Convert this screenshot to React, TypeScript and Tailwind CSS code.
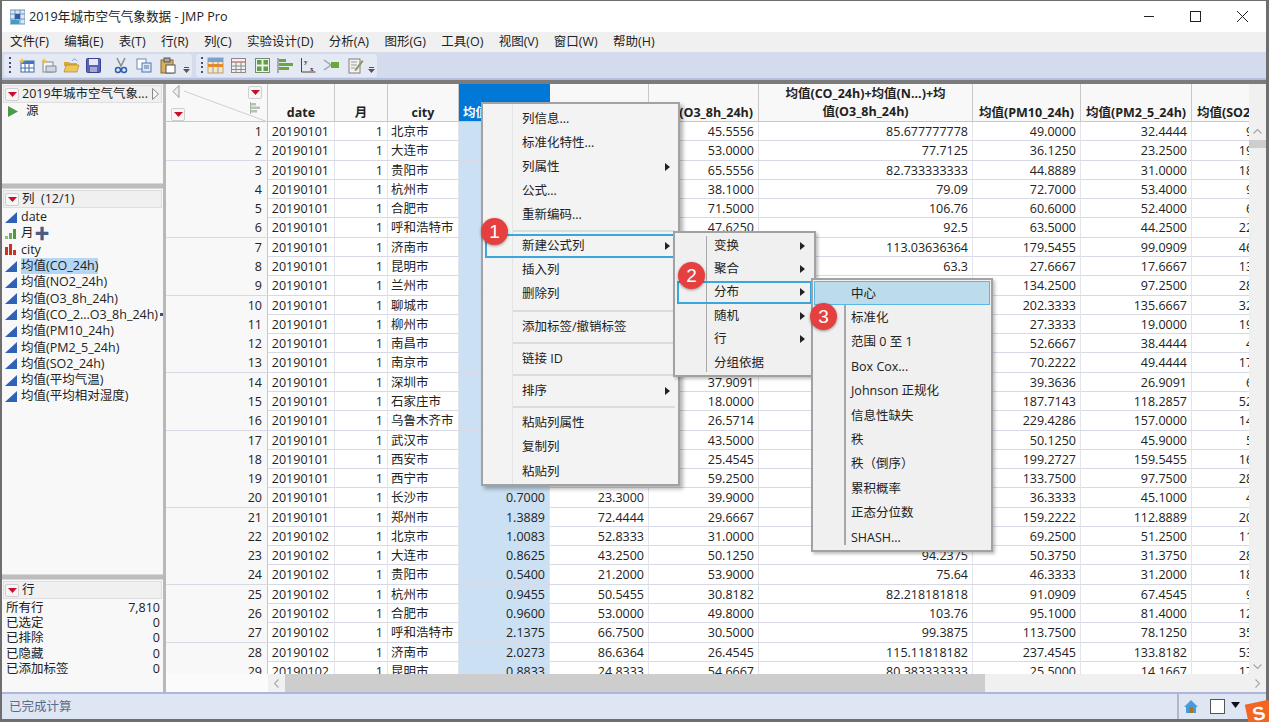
import React from "react";

const cities = ["北京市","大连市","贵阳市","杭州市","合肥市","呼和浩特市","济南市","昆明市","兰州市","聊城市","柳州市","南昌市","南京市","深圳市","石家庄市","乌鲁木齐市","武汉市","西安市","西宁市","长沙市","郑州市","北京市","大连市","贵阳市","杭州市","合肥市","呼和浩特市","济南市","昆明市"];
const co = ["","","","","","","","","","","","","","","","","","","","0.7000","1.3889","1.0083","0.8625","0.5400","0.9455","0.9600","2.1375","2.0273","0.8833"];
const no2 = ["","","","","","","","","","","","","","","","","","","","23.3000","72.4444","52.8333","43.2500","21.2000","50.5455","53.0000","66.7500","86.6364","24.8333"];
const o3 = ["45.5556","53.0000","65.5556","38.1000","71.5000","47.6250","","","","","","","","37.9091","18.0000","26.5714","43.5000","25.4545","59.2500","39.9000","29.6667","31.0000","50.1250","53.9000","30.8182","49.8000","30.5000","26.4545","54.6667"];
const combo = ["85.677777778","77.7125","82.733333333","79.09","106.76","92.5","113.03636364","63.3","","","","","","","","","","","","","","","94.2375","75.64","82.218181818","103.76","99.3875","115.11818182","80.383333333"];
const pm10 = ["49.0000","36.1250","44.8889","72.7000","60.6000","63.5000","179.5455","27.6667","134.2500","202.3333","27.3333","52.6667","70.2222","39.3636","187.7143","229.4286","50.1250","199.2727","133.7500","36.3333","159.2222","69.2500","50.3750","46.3333","91.0909","95.1000","113.7500","237.4545","25.5000"];
const pm25 = ["32.4444","23.2500","31.0000","53.4000","52.4000","44.2500","99.0909","17.6667","97.2500","135.6667","19.0000","38.4444","49.4444","26.9091","118.2857","157.0000","45.9000","159.5455","97.7500","45.1000","112.8889","51.2500","31.3750","31.2000","67.4545","81.4000","78.1250","133.8182","14.1667"];
const so2 = ["9.0000","19.0000","18.0000","9.0000","6.0000","22.0000","46.0000","13.0000","28.0000","32.0000","19.0000","4.0000","17.0000","6.0000","52.0000","14.0000","5.0000","16.0000","28.0000","4.0000","20.0000","11.0000","28.0000","18.0000","9.0000","12.0000","35.0000","53.0000","17.0000"];

const gridCols = "grid grid-cols-[102px_67px_53px_71px_91px_99px_110px_214px_108px_111px_98px]";

function RedBtn() {
  return (
    <span className="flex h-[13px] w-[14px] items-center justify-center rounded-[2px] border border-[#cfcfcf] bg-[#f6f6f6]">
      <svg width="9" height="5" viewBox="0 0 9 5"><path d="M0 0h9L4.5 5z" fill="#c8102e" /></svg>
    </span>
  );
}

function ColIcon({ kind = "c" }: { kind?: "c" | "o" | "n" }) {
  if (kind === "o")
    return (
      <svg width="12" height="11" viewBox="0 0 12 11" className="shrink-0">
        <rect x="0" y="8" width="3" height="3" fill="#8fbf80" />
        <rect x="4" y="5" width="3" height="6" fill="#6aa85c" />
        <rect x="8" y="1" width="3" height="10" fill="#4c9a44" />
      </svg>
    );
  if (kind === "n")
    return (
      <svg width="12" height="11" viewBox="0 0 12 11" className="shrink-0">
        <rect x="0" y="3" width="3" height="8" fill="#c8321e" />
        <rect x="4" y="0" width="3" height="11" fill="#c8321e" />
        <rect x="8" y="6" width="3" height="5" fill="#c8321e" />
      </svg>
    );
  return (
    <svg width="12" height="11" viewBox="0 0 12 11" className="shrink-0">
      <path d="M0 11L12 0v11z" fill="#2f62b5" />
    </svg>
  );
}

function Grip() {
  return (
    <span className="mx-[1px] flex h-[16px] w-[2px] flex-col justify-between">
      {[0, 1, 2, 3].map((i) => <span key={i} className="h-[2px] w-[2px] bg-[#44507a]" />)}
    </span>
  );
}

function Overflow() {
  return (
    <span className="mt-[10px] flex w-[7px] flex-col items-center gap-[1px]">
      <span className="h-[1px] w-[5px] bg-[#555]" />
      <svg width="7" height="4" viewBox="0 0 7 4"><path d="M0 0h7L3.5 4z" fill="#555" /></svg>
    </span>
  );
}

function Ic({ children }: { children: React.ReactNode }) {
  return <svg width="17" height="17" viewBox="0 0 17 17" className="shrink-0">{children}</svg>;
}

const toolA = [
  <Ic key="a"><rect x="2" y="4" width="13" height="11" fill="#fff" stroke="#3f6aa8" /><path d="M2 4h13v3H2z" fill="#3f78c0" /><path d="M6 7v8M10 7v8M2 11h13" stroke="#3f6aa8" /><path d="M3 1l1 2 2 1-2 1-1 2-1-2-2-1 2-1z" fill="#f2c230" /></Ic>,
  <Ic key="b"><rect x="2" y="5" width="10" height="10" fill="#f3f3f3" stroke="#8a8a8a" /><path d="M5 9h10v6H5z" fill="#cfd6dd" stroke="#7a8a9a" /><path d="M3 1l1 2 2 1-2 1-1 2-1-2-2-1 2-1z" fill="#f2c230" /></Ic>,
  <Ic key="c"><path d="M1 5h5l1 1h7v3H1z" fill="#d9a93a" /><path d="M1 15l2-7h13l-2 7z" fill="#efc65a" stroke="#a97c20" strokeWidth=".6" /><path d="M9 4c2-3 4-2 5 0" stroke="#6aa0d0" fill="none" /></Ic>,
  <Ic key="d"><rect x="1.500" y="1.500" width="14" height="14" rx="1" fill="#5a62b8" stroke="#3a4490" /><rect x="4" y="2" width="9" height="6" fill="#e8e8f4" /><rect x="5" y="10" width="7" height="5" fill="#a4a9cf" /></Ic>,
];
const toolB = [
  <Ic key="e"><path d="M4 1l4 8 4-8" fill="none" stroke="#8a8a8a" strokeWidth="1.500" /><circle cx="5" cy="13" r="2.500" fill="none" stroke="#2f5fa8" strokeWidth="1.500" /><circle cx="11" cy="13" r="2.500" fill="none" stroke="#2f5fa8" strokeWidth="1.500" /></Ic>,
  <Ic key="f"><rect x="1" y="2" width="9" height="10" fill="#fff" stroke="#6a8ab8" /><rect x="6" y="6" width="9" height="9" fill="#dce8f6" stroke="#4a78b0" /><path d="M8 9h5M8 11h5" stroke="#4a78b0" /></Ic>,
  <Ic key="g"><rect x="2" y="3" width="12" height="13" fill="#d8b060" stroke="#8a6a28" /><rect x="5" y="1" width="6" height="4" fill="#a8a8a8" stroke="#555" /><rect x="7" y="8" width="9" height="8" fill="#fff" stroke="#555" /></Ic>,
];
const toolC = [
  <Ic key="h"><rect x="1" y="1" width="15" height="15" fill="#f5e8c8" stroke="#b8a070" /><rect x="1" y="1" width="15" height="4" fill="#7aa0d8" /><rect x="1" y="7" width="15" height="3" fill="#e88a20" /><path d="M6 1v15M11 1v15" stroke="#999" /></Ic>,
  <Ic key="i"><rect x="1.500" y="1.500" width="14" height="14" fill="#f0f0f0" stroke="#8a8a8a" /><path d="M1.500 5h14" stroke="#b84040" /><path d="M1.500 9h14M1.500 12.500h14M6 5v10M11 5v10" stroke="#8a8a8a" /></Ic>,
  <Ic key="j"><rect x="1.500" y="1.500" width="14" height="14" fill="#eef2ea" stroke="#7a8a70" /><rect x="3" y="3" width="4.500" height="4.500" fill="#5fa048" /><rect x="9.500" y="3" width="4.500" height="4.500" fill="#5fa048" /><rect x="3" y="9.500" width="4.500" height="4.500" fill="#5fa048" /><rect x="9.500" y="9.500" width="4.500" height="4.500" fill="#5fa048" /></Ic>,
  <Ic key="k"><path d="M1 1v15" stroke="#666" /><rect x="2" y="2" width="7" height="3" fill="#6aa83c" /><rect x="2" y="6" width="14" height="3" fill="#6aa83c" /><rect x="2" y="10" width="10" height="3" fill="#6aa83c" /></Ic>,
  <Ic key="l"><path d="M1.500 1v14h14" fill="none" stroke="#444" /><text x="4" y="7" fontSize="7" fontWeight="700" fill="#333" fontFamily="Liberation Serif">y</text><text x="10" y="14" fontSize="7" fontWeight="700" fill="#333" fontFamily="Liberation Serif">x</text></Ic>,
  <Ic key="m"><path d="M1 3l7 5-7 5" fill="none" stroke="#9aa8a8" strokeWidth="1.500" /><rect x="8" y="5" width="8" height="6" fill="#6aa83c" /></Ic>,
  <Ic key="n"><rect x="2" y="2" width="11" height="14" fill="#f2f2f2" stroke="#808080" /><path d="M4 5h6M4 8h6M4 11h4" stroke="#999" /><path d="M8 12l7-9 1.500 1.500-7 9-2 .5z" fill="#8a9a60" /></Ic>,
];

function Item({ label, h, arrow, left, arrowRight }: { label: string; h: string; arrow?: boolean; left: string; arrowRight?: string }) {
  return (
    <div className={`relative flex items-center ${h} ${left}`}>
      <span>{label}</span>
      {arrow && (
        <svg width="5" height="8" viewBox="0 0 5 8" className={`absolute top-1/2 -translate-y-1/2 ${arrowRight ?? "right-[8px]"}`}><path d="M0 0l5 4-5 4z" fill="#222" /></svg>
      )}
    </div>
  );
}

function Sep({ h = "h-[8px]" }: { h?: string }) {
  return <div className={`ml-[29px] mr-[3px] flex ${h} items-center`}><div className="h-[2px] w-full bg-[#dcdcdc]" /></div>;
}

function Badge({ n, cls }: { n: number; cls: string }) {
  return (
    <div className={`absolute flex h-[27px] w-[27px] items-center justify-center rounded-full bg-[#e5403f] text-[19px] text-white shadow-[0_1px_3px_rgba(0,0,0,0.4)] [font-family:'Liberation_Sans',sans-serif] ${cls}`}>{n}</div>
  );
}

function Cell({ v, cls = "" }: { v: string; cls?: string }) {
  return <div className={`overflow-hidden whitespace-nowrap border-r border-[#e3e3ec] pr-[4px] text-right ${cls}`}>{v}</div>;
}

export default function App() {
  const menus = ["文件(F)","编辑(E)","表(T)","行(R)","列(C)","实验设计(D)","分析(A)","图形(G)","工具(O)","视图(V)","窗口(W)","帮助(H)"];
  const cols: [string, "c" | "o" | "n"][] = [["date","c"],["月","o"],["city","n"],["均值(CO_24h)","c"],["均值(NO2_24h)","c"],["均值(O3_8h_24h)","c"],["均值(CO_2...O3_8h_24h)","c"],["均值(PM10_24h)","c"],["均值(PM2_5_24h)","c"],["均值(SO2_24h)","c"],["均值(平均气温)","c"],["均值(平均相对湿度)","c"]];
  const stats: [string, string][] = [["所有行","7,810"],["已选定","0"],["已排除","0"],["已隐藏","0"],["已添加标签","0"]];
  return (
    <div className="relative h-[722px] w-[1269px] overflow-hidden bg-[#6e6e6e] pb-[3px] pl-[2px] pr-[3px] pt-[1px] text-[12.5px] leading-[16px] text-[#222] [font-family:'Open_Sans','Noto_Sans_CJK_SC',sans-serif]">
      <div className="flex h-full flex-col bg-white">
        {/* title bar */}
        <div className="flex h-[31px] shrink-0 items-center bg-white pl-[8px]">
          <svg width="15" height="16" viewBox="0 0 15 16" className="mr-[4px]">
            <rect x="0" y="1" width="15" height="14" fill="#dbe6f4" stroke="#6f8fb8" />
            <path d="M0 5h15M5 1v14M10 1v14M0 10h15" stroke="#6f8fb8" />
            <rect x="5" y="5" width="5" height="5" fill="#2f5fa0" />
            <rect x="1" y="11" width="8" height="4" fill="#3aa0c8" />
          </svg>
          <span className="text-[12.6px]">2019年城市空气气象数据 - JMP Pro</span>
          <div className="ml-auto flex items-center">
            <span className="flex h-[31px] w-[47px] items-center justify-center"><span className="h-[1px] w-[10px] bg-[#222]" /></span>
            <span className="flex h-[31px] w-[47px] items-center justify-center"><span className="h-[11px] w-[11px] border border-[#222]" /></span>
            <span className="flex h-[31px] w-[47px] items-center justify-center">
              <svg width="11" height="11" viewBox="0 0 11 11"><path d="M0 0l11 11M11 0L0 11" stroke="#222" /></svg>
            </span>
          </div>
        </div>
        {/* menu bar */}
        <div className="flex h-[20px] shrink-0 items-center gap-[15.35px] bg-[#f0f0f0] pl-[8px]">
          {menus.map((m) => <span key={m}>{m}</span>)}
        </div>
        {/* tool bar */}
        <div className="flex h-[28px] shrink-0 items-center gap-[4px] border-b-2 border-[#b4bede] bg-[#d4dbed] pl-[2px]">
          <div className="flex h-[23px] w-[188px] items-center gap-[5px] rounded-[3px] bg-[#e4e9f4] px-[4px]">
            <Grip />
            <span className="ml-[2px] flex items-center gap-[5px]">{toolA}</span>
            <span className="h-[18px] w-[1px] bg-[#9aa0b0]" />
            <span className="flex items-center gap-[6px] pl-[1px]">{toolB}</span>
            <span className="ml-[2px]"><Overflow /></span>
          </div>
          <div className="flex h-[23px] w-[181px] items-center rounded-[3px] bg-[#e4e9f4] px-[4px]">
            <Grip />
            <span className="ml-[3px] flex items-center gap-[6.3px]">{toolC}</span>
            <span className="ml-[4px]"><Overflow /></span>
          </div>
        </div>
        <div className="h-[4px] shrink-0 bg-[#7b7b7b]" />
        {/* main */}
        <div className="flex min-h-0 flex-1">
          {/* left panels */}
          <div className="flex w-[161px] shrink-0 flex-col bg-[#f8f8f8]">
            <div className="flex h-[99px] shrink-0 flex-col">
              <div className="mx-[1px] mt-[1px] flex h-[18px] items-center gap-[3px] border border-[#dedede] bg-[#f0f0f0] pl-[1px]">
                <RedBtn />
                <span className="flex-1 whitespace-nowrap">2019年城市空气气象...</span>
                <svg width="7" height="12" viewBox="0 0 7 12" className="mr-[2px]"><path d="M.5.500l6 5.500-6 5.500z" fill="#f6f6f6" stroke="#888" /></svg>
              </div>
              <div className="flex items-center pl-[6px]">
                <svg width="10" height="11" viewBox="0 0 10 11" className="mr-[8px]"><path d="M0 0l10 5.500L0 11z" fill="#4a9a4a" /></svg>
                <span>源</span>
              </div>
            </div>
            <div className="h-[6px] shrink-0 border-y border-[#d8d8d8] bg-[#bdbdbd]" />
            <div className="flex h-[385px] shrink-0 flex-col">
              <div className="mx-[1px] mt-[1px] flex h-[18px] items-center gap-[3px] border border-[#dedede] bg-[#f0f0f0] pl-[1px]">
                <RedBtn />
                <span>列&nbsp; (12/1)</span>
              </div>
              <div className="flex flex-col pt-[1px]">
                {cols.map(([name, kind], i) => (
                  <div key={i} className="flex h-[16.3px] items-center gap-[4px] overflow-hidden whitespace-nowrap pl-[3px]">
                    <ColIcon kind={kind} />
                    <span className={i === 3 ? "bg-[#b5d7f5]" : ""}>{name}</span>
                    {i === 1 && <span className="ml-[-3px] text-[15px] font-bold leading-[14px] text-[#4a5c88]">✚</span>}
                    {i === 6 && <span className="ml-[-2px] h-[3px] w-[3px] bg-[#3a5080]" />}
                  </div>
                ))}
              </div>
            </div>
            <div className="h-[6px] shrink-0 border-y border-[#d8d8d8] bg-[#bdbdbd]" />
            <div className="flex flex-1 flex-col">
              <div className="mx-[1px] mt-[1px] flex h-[18px] items-center gap-[3px] border border-[#dedede] bg-[#f0f0f0] pl-[1px]">
                <RedBtn />
                <span>行</span>
              </div>
              <div className="flex flex-col pl-[4px] pr-[3px] pt-[1px]">
                {stats.map(([k, v]) => (
                  <div key={k} className="flex h-[15.4px] items-center justify-between">
                    <span>{k}</span><span>{v}</span>
                  </div>
                ))}
              </div>
            </div>
          </div>
          <div className="w-[3px] shrink-0 bg-[#b8b8b8]" />
          {/* table */}
          <div className="flex min-w-0 flex-1 flex-col">
            <div className="flex min-h-0 flex-1">
              <div className="min-w-0 flex-1 overflow-hidden bg-white">
                <div className={`${gridCols} h-[38px] w-[1124px] border-b border-[#c8c8c8] bg-[#f8f8f8] text-center font-bold leading-[17px]`}>
                  <div className="relative flex justify-between border-r border-[#c8c8c8] px-[5px]">
                    <svg width="102" height="38" viewBox="0 0 102 38" className="absolute left-0 top-0"><path d="M18 7L102 38" stroke="#cfcfcf" /></svg>
                    <div className="relative flex flex-col justify-between pt-[1px]">
                      <svg width="8" height="13" viewBox="0 0 8 13" className="ml-[1px]"><path d="M7 .5L1 6.500l6 6z" fill="#f0f0f0" stroke="#999" /></svg>
                      <RedBtn />
                    </div>
                    <div className="relative flex flex-col items-end gap-[3px] pt-[2px]">
                      <RedBtn />
                      <svg width="10" height="12" viewBox="0 0 10 12" className="mr-[2px]"><path d="M.5 0v12" stroke="#a9b5a9" /><rect x="1" y="1" width="5" height="2.500" fill="#b4c4b4" /><rect x="1" y="4.500" width="9" height="2.500" fill="#b4c4b4" /><rect x="1" y="8" width="6" height="2.500" fill="#b4c4b4" /></svg>
                    </div>
                  </div>
                  <div className="flex items-end justify-center border-r border-[#c8c8c8]">date</div>
                  <div className="flex items-end justify-center border-r border-[#c8c8c8]">月</div>
                  <div className="flex items-end justify-center border-r border-[#c8c8c8]">city</div>
                  <div className="flex items-end justify-start whitespace-nowrap bg-[#0078d7] pl-[4px] text-white">均值(CO_24h)</div>
                  <div className="flex items-end justify-center border-r border-[#c8c8c8]">均值(NO2_24h)</div>
                  <div className="flex items-end justify-end whitespace-nowrap border-r border-[#c8c8c8] pr-[5px]">均值(O3_8h_24h)</div>
                  <div className="flex items-end justify-center border-r border-[#c8c8c8]">
                    <span className="leading-[18px]">均值(CO_24h)+均值(N...)+均<br />值(O3_8h_24h)</span>
                  </div>
                  <div className="flex items-end justify-center whitespace-nowrap border-r border-[#c8c8c8]">均值(PM10_24h)</div>
                  <div className="flex items-end justify-center whitespace-nowrap border-r border-[#c8c8c8]">均值(PM2_5_24h)</div>
                  <div className="flex items-end justify-start whitespace-nowrap pl-[5px]">均值(SO2_24h)</div>
                </div>
                <div className="h-[552px] overflow-hidden">
                  {cities.map((c, i) => (
                    <div key={i} className={`${gridCols} h-[19.29px] w-[1124px] border-b border-[#d8d9e4] leading-[19px]`}>
                      <div className="border-r border-[#c8c8c8] bg-[#f8f8f8] pr-[5px] text-right">{i + 1}</div>
                      <Cell v={i < 21 ? "20190101" : "20190102"} cls="pr-[5px]" />
                      <Cell v="1" />
                      <div className="overflow-hidden whitespace-nowrap border-r border-[#e3e3ec] pl-[3px]">{c}</div>
                      <Cell v={co[i]} cls="bg-[#cbe0f2]" />
                      <Cell v={no2[i]} />
                      <Cell v={o3[i]} />
                      <Cell v={combo[i]} />
                      <Cell v={pm10[i]} />
                      <Cell v={pm25[i]} />
                      <Cell v={so2[i]} />
                    </div>
                  ))}
                </div>
              </div>
              {/* vertical scrollbar */}
              <div className="flex w-[17px] shrink-0 flex-col items-center bg-[#f0f0f0] pt-[38px]">
                <div className="flex h-[18px] w-full items-center justify-center">
                  <svg width="9" height="5" viewBox="0 0 9 5"><path d="M.5 4.500l4-4 4 4" fill="none" stroke="#a8a8a8" strokeWidth="1.200" /></svg>
                </div>
                <div className="h-[8px] w-full bg-[#cdcdcd]" />
                <div className="flex flex-1 items-end pb-[5px]">
                  <svg width="9" height="5" viewBox="0 0 9 5"><path d="M.5.500l4 4 4-4" fill="none" stroke="#a8a8a8" strokeWidth="1.200" /></svg>
                </div>
              </div>
            </div>
            {/* horizontal scrollbar */}
            <div className="flex h-[18px] shrink-0">
              <div className="w-[102px] shrink-0 bg-[#fbfbfb]" />
              <div className="flex flex-1 items-center bg-[#f0f0f0]">
                <div className="flex w-[17px] shrink-0 justify-center">
                  <svg width="5" height="9" viewBox="0 0 5 9"><path d="M4.500.500l-4 4 4 4" fill="none" stroke="#a8a8a8" strokeWidth="1.200" /></svg>
                </div>
                <div className="h-full w-[700px] bg-[#cdcdcd]" />
                <div className="flex flex-1 justify-end pr-[6px]">
                  <svg width="5" height="9" viewBox="0 0 5 9"><path d="M.5.500l4 4-4 4" fill="none" stroke="#a8a8a8" strokeWidth="1.200" /></svg>
                </div>
              </div>
            </div>
          </div>
        </div>
        {/* status bar */}
        <div className="flex h-[27px] shrink-0 items-center border-t-2 border-[#aeb6dc] bg-[#dfe6f3] pl-[7px] text-[#5b6a8a]">
          <span>已完成计算</span>
          <div className="ml-auto flex h-full w-[89px] items-center border-l-2 border-[#b4b8c4] pl-[5px]">
            <svg width="14" height="13" viewBox="0 0 14 13"><path d="M7 0L0 7h2v6h10V7h2z" fill="#4a9ad8" /><rect x="5" y="7" width="4" height="6" fill="#a8762a" /></svg>
            <span className="ml-[12px] h-[15px] w-[15px] border border-[#555] bg-white" />
            <svg width="9" height="6" viewBox="0 0 9 6" className="mb-[4px] ml-[6px]"><path d="M0 0h9L4.500 6z" fill="#111" /></svg>
          </div>
        </div>
      </div>

      {/* Sogou tray logo */}
      <div className="absolute left-[1247px] top-[702px] flex h-[24px] w-[24px] -rotate-12 items-center justify-center bg-[#f26522] text-[19px] font-bold leading-[20px] text-white [font-family:'Liberation_Sans',sans-serif]">S</div>

      {/* Context menu 1 */}
      <div className="absolute left-[481px] top-[102px] h-[384px] w-[199px] border-2 border-[#a2a2a2] bg-[#f3f3f3] pt-[2.5px] shadow-[3px_3px_4px_rgba(0,0,0,0.3)]">
        <div className="absolute bottom-0 left-[29px] top-0 w-[1px] bg-[#e4e4e4]" />
        {[["列信息..."],["标准化特性..."],["列属性",1],["公式..."],["重新编码..."]].map(([l, a]) => (
          <Item key={l as string} label={l as string} arrow={!!a} h="h-[24.2px]" left="pl-[39px]" />
        ))}
        <Sep h="h-[6.5px]" />
        <div className="relative ml-[2px] mr-[2px] box-border flex h-[24.2px] items-center border-2 border-[#39a7dd] pl-[35px]">
          新建公式列
          <svg width="5" height="8" viewBox="0 0 5 8" className="absolute right-[4px] top-1/2 -translate-y-1/2"><path d="M0 0l5 4-5 4z" fill="#222" /></svg>
        </div>
        <Item label="插入列" h="h-[24.2px]" left="pl-[39px]" />
        <Item label="删除列" h="h-[24.2px]" left="pl-[39px]" />
        <Sep />
        <Item label="添加标签/撤销标签" h="h-[24.2px]" left="pl-[39px]" />
        <Sep />
        <Item label="链接 ID" h="h-[24.2px]" left="pl-[39px]" />
        <Sep />
        <Item label="排序" arrow h="h-[24.2px]" left="pl-[39px]" />
        <Sep />
        <Item label="粘贴列属性" h="h-[24.2px]" left="pl-[39px]" />
        <Item label="复制列" h="h-[24.2px]" left="pl-[39px]" />
        <Item label="粘贴列" h="h-[24.2px]" left="pl-[39px]" />
      </div>

      {/* Context menu 2 */}
      <div className="absolute left-[673px] top-[231px] h-[146px] w-[143px] border-2 border-[#a2a2a2] bg-[#f0f0f0] pt-[1px] shadow-[2px_2px_3px_rgba(0,0,0,0.25)]">
        <div className="absolute bottom-[3px] left-[31px] top-[3px] w-[1px] bg-[#a8a8a8]" />
        <Item label="变换" arrow arrowRight="right-[9px]" h="h-[23.4px]" left="pl-[39px]" />
        <Item label="聚合" arrow arrowRight="right-[9px]" h="h-[23.4px]" left="pl-[39px]" />
        <div className="relative mx-[2px] box-border flex h-[23.4px] items-center border-2 border-[#39a7dd] pl-[35px]">
          分布
          <svg width="5" height="8" viewBox="0 0 5 8" className="absolute right-[5px] top-1/2 -translate-y-1/2"><path d="M0 0l5 4-5 4z" fill="#222" /></svg>
        </div>
        <Item label="随机" arrow arrowRight="right-[9px]" h="h-[23.4px]" left="pl-[39px]" />
        <Item label="行" arrow arrowRight="right-[9px]" h="h-[23.4px]" left="pl-[39px]" />
        <Item label="分组依据" h="h-[23.4px]" left="pl-[39px]" />
      </div>

      {/* Context menu 3 */}
      <div className="absolute left-[811px] top-[278px] h-[274px] w-[182px] border-2 border-[#a2a2a2] bg-[#f0f0f0] pt-[1px] shadow-[2px_2px_3px_rgba(0,0,0,0.25)]">
        <div className="absolute bottom-[5px] left-[31px] top-[3px] w-[2px] bg-[#a8a8a8]" />
        <div className="relative mx-[1px] box-border flex h-[24.400px] items-center border border-[#5ab8e6] bg-[#bcdcec] pl-[36px]"><span className="mt-[1px]">中心</span></div>
        {["标准化","范围 0 至 1","Box Cox...","Johnson 正规化","信息性缺失","秩","秩（倒序）","累积概率","正态分位数","SHASH..."].map((l) => (
          <Item key={l} label={l} h="h-[24.400px] pt-[1px]" left="pl-[38px]" />
        ))}
      </div>

      <Badge n={1} cls="left-[481px] top-[218px]" />
      <Badge n={2} cls="left-[678px] top-[262px]" />
      <Badge n={3} cls="left-[810px] top-[303px]" />
    </div>
  );
}
